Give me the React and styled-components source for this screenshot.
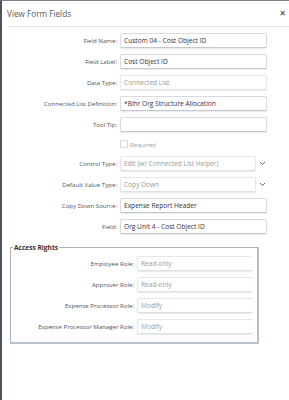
import React from "react";
import styled, { createGlobalStyle } from "styled-components";

const Global = createGlobalStyle`
  html, body {
    margin: 0;
    padding: 0;
    background: #fff;
    font-family: "Open Sans", "Liberation Sans", sans-serif;
  }
`;

const Frame = styled.div`
  width: 289px;
  height: 400px;
  box-sizing: border-box;
  border-top: 1px solid #7a7f88;
  border-left: 2px solid #4d535e;
  background: #fff;
  overflow: hidden;
`;

const Header = styled.div`
  display: flex;
  align-items: center;
  justify-content: space-between;
  height: 25px;
  margin-left: 5px;
  padding-right: 3px;
  border-bottom: 1px solid #e4e4e4;
`;

const Title = styled.h1`
  margin: 0;
  font-size: 8.2px;
  font-weight: 400;
  color: #555a62;
`;

const Close = styled.span`
  font-size: 8px;
  line-height: 1;
  color: #2c3447;
  font-family: "DejaVu Sans", sans-serif;
`;

const Form = styled.div`
  display: flex;
  flex-direction: column;
  gap: 6px;
  padding-top: 6px;
`;

const Row = styled.div`
  display: grid;
  grid-template-columns: ${(p) => p.$label || 115}px 1fr;
  column-gap: 3px;
  align-items: center;
  height: ${(p) => p.$h || 15}px;
`;

const Label = styled.label`
  text-align: right;
  font-size: 6.1px;
  color: #4f535a;
  white-space: nowrap;
`;

const Field = styled.div`
  box-sizing: border-box;
  width: ${(p) => p.$w}px;
  height: 15px;
  padding-left: 3px;
  display: flex;
  align-items: center;
  font-size: 6.6px;
  white-space: nowrap;
  overflow: hidden;
  color: ${(p) => (p.$disabled ? "#9a9a9a" : "#2f3440")};
  border: 1px solid ${(p) => (p.$disabled ? "#e6e7e9" : "#d9dbdf")};
  border-bottom-color: ${(p) => (p.$disabled ? "#dcdfe3" : "#c3c8cf")};
  border-right: ${(p) => (p.$open ? "none" : undefined)};
  border-radius: 2px;
  box-shadow: 0 1px 1px rgba(60, 70, 90, 0.12);
  background: #fff;
`;

const SelectWrap = styled.div`
  display: flex;
  align-items: center;
  gap: 3px;
`;

const Check = styled.div`
  display: flex;
  align-items: center;
  gap: 2px;
  font-size: 6.1px;
  color: #9a9a9a;
`;

const Box = styled.span`
  width: 6px;
  height: 6px;
  border: 1px solid #d4d6da;
  border-radius: 1px;
  background: #fff;
`;

const Group = styled.fieldset`
  margin: 3px 30px 0 8px;
  padding: 4px 0 8px 0;
  border: 1px solid #aab2be;
  border-right-width: 2px;
  border-bottom-width: 2px;
  border-right-color: #b9c0ca;
  border-bottom-color: #b9c0ca;
  display: flex;
  flex-direction: column;
  gap: 6px;
`;

const Legend = styled.legend`
  padding: 0 1px;
  margin-left: 2px;
  font-size: 6.6px;
  font-weight: 700;
  color: #333;
`;

const Chevron = () => (
  <svg width="7" height="5" viewBox="0 0 7 5">
    <polyline points="1,1 3.5,3.5 6,1" fill="none" stroke="#5a6070" strokeWidth="1" />
  </svg>
);

const fields = [
  { label: "Field Name:", value: "Custom 04 - Cost Object ID" },
  { label: "Field Label:", value: "Cost Object ID" },
  { label: "Data Type:", value: "Connected List", disabled: true },
  { label: "Connected List Definition:", value: "*Bihr Org Structure Allocation" },
  { label: "Tool Tip:", value: "" },
];

const selects = [
  { label: "Control Type:", value: "Edit (w/ Connected List Helper)" },
  { label: "Default Value Type:", value: "Copy Down" },
];

const after = [
  { label: "Copy Down Source:", value: "Expense Report Header" },
  { label: "Field:", value: "Org Unit 4 - Cost Object ID" },
];

const rights = [
  { label: "Employee Role:", value: "Read-only" },
  { label: "Approver Role:", value: "Read-only" },
  { label: "Expense Processor Role:", value: "Modify" },
  { label: "Expense Processor Manager Role:", value: "Modify" },
];

export default function App() {
  return (
    <>
      <Global />
      <Frame>
        <Header>
          <Title>View Form Fields</Title>
          <Close>✕</Close>
        </Header>
        <Form>
          {fields.map((f) => (
            <Row key={f.label}>
              <Label>{f.label}</Label>
              <Field $w={147} $disabled={f.disabled}>{f.value}</Field>
            </Row>
          ))}
          <Row $h={12}>
            <span />
            <Check>
              <Box />
              Required
            </Check>
          </Row>
          {selects.map((f) => (
            <Row key={f.label}>
              <Label>{f.label}</Label>
              <SelectWrap>
                <Field $w={136} $disabled>{f.value}</Field>
                <Chevron />
              </SelectWrap>
            </Row>
          ))}
          {after.map((f) => (
            <Row key={f.label}>
              <Label>{f.label}</Label>
              <Field $w={147}>{f.value}</Field>
            </Row>
          ))}
          <Group>
            <Legend>Access Rights</Legend>
            {rights.map((f) => (
              <Row key={f.label} $label={123}>
                <Label>{f.label}</Label>
                <Field $w={116} $disabled $open>{f.value}</Field>
              </Row>
            ))}
          </Group>
        </Form>
      </Frame>
    </>
  );
}
